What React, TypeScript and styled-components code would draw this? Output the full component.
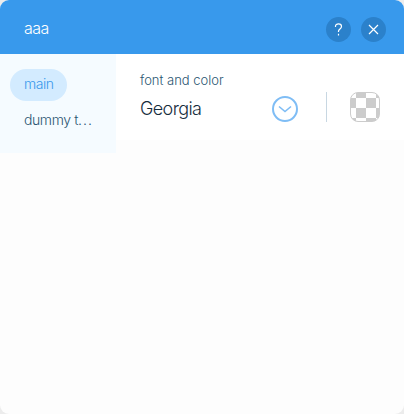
import React from 'react';
import styled, { createGlobalStyle } from 'styled-components';

const GlobalStyle = createGlobalStyle`
  * { box-sizing: border-box; }
  body { margin: 0; background: #ececec; font-family: Inter, "Liberation Sans", sans-serif; font-weight: 300; }
`;

const Panel = styled.div`
  width: 404px;
  height: 414px;
  border-radius: 9px;
  overflow: hidden;
  background: #fdfdfd;
`;

const Header = styled.header`
  display: flex;
  align-items: center;
  height: 54px;
  padding: 4px 18px 0 24px;
  background: #3899ec;
  color: #fff;
`;

const Title = styled.h1`
  flex: 1;
  margin: 0;
  padding-bottom: 3px;
  font-size: 16px;
  line-height: 24px;
  font-weight: 300;
  letter-spacing: -0.6px;
`;

const Actions = styled.div`
  display: flex;
  gap: 10px;
`;

const RoundButton = styled.button`
  display: grid;
  place-items: center;
  width: 25px;
  height: 25px;
  padding: 0;
  border: 0;
  border-radius: 50%;
  background: #2b81cb;
  color: #fff;
`;

const Body = styled.div`
  display: flex;
  align-items: flex-start;
`;

const Sidebar = styled.nav`
  display: flex;
  flex-direction: column;
  align-items: flex-start;
  gap: 4px;
  width: 116px;
  height: 99px;
  padding: 15px 10px;
  background: #f5fbff;
`;

const Tab = styled.div<{ $active?: boolean }>`
  height: 32px;
  padding: 0 14px;
  border-radius: 16px;
  font-size: 14px;
  line-height: 30px;
  white-space: nowrap;
  letter-spacing: ${p => (p.$active ? '-0.5px' : '-0.4px')};
  color: ${p => (p.$active ? '#3899ec' : '#2b5672')};
  background: ${p => (p.$active ? '#d3ebff' : 'transparent')};
`;

const Ellipsis = styled.span`
  letter-spacing: 1.1px;
`;

const Section = styled.section`
  flex: 1;
  height: 86px;
  padding: 17px 24px 0;
  background: #fff;
`;

const Label = styled.div`
  font-size: 13px;
  line-height: 18px;
  letter-spacing: 0;
  color: #2b5672;
`;

const Row = styled.div`
  display: flex;
  align-items: center;
  height: 30px;
  margin-top: 3px;
`;

const FontName = styled.div`
  flex: 1;
  padding-top: 4px;
  font-size: 18px;
  line-height: 26px;
  letter-spacing: -0.6px;
  color: #162d3d;
`;

const Divider = styled.div`
  width: 1px;
  height: 30px;
  margin: 0 23px 0 28px;
  background: #c8d7e2;
`;

const Icon = styled.svg`
  display: block;
  fill: none;
  stroke: currentColor;
`;

const Chevron = styled(Icon)`
  color: #7fbdf5;
  margin-top: 4px;
`;

const Swatch = styled.div`
  width: 30px;
  height: 30px;
  border: 1px solid #ccc;
  border-radius: 8px;
  background: conic-gradient(#ccc 25%, #fff 0 50%, #ccc 0 75%, #fff 0) -5px -5px / 20px 20px;
`;

export default function App() {
  return (
    <>
      <GlobalStyle />
      <Panel>
        <Header>
          <Title>aaa</Title>
          <Actions>
            <RoundButton aria-label="Help">
              <Icon width="9" height="13" viewBox="0 0 9 13" strokeWidth="1.2">
                <path d="M1.5 4V3.2C1.5 1.7 2.8.9 4.5.9s3 .9 3 2.6c0 2.3-3 2.5-3 4.6v1M4.5 10.8v1.6" />
              </Icon>
            </RoundButton>
            <RoundButton aria-label="Close">
              <Icon width="11" height="11" viewBox="0 0 11 11" strokeWidth="1.2">
                <path d="M1 1l9 9M10 1l-9 9" />
              </Icon>
            </RoundButton>
          </Actions>
        </Header>
        <Body>
          <Sidebar>
            <Tab $active>main</Tab>
            <Tab>dummy t<Ellipsis>...</Ellipsis></Tab>
          </Sidebar>
          <Section>
            <Label>font and color</Label>
            <Row>
              <FontName>Georgia</FontName>
              <Chevron width="26" height="26" viewBox="0 0 26 26">
                <circle cx="13" cy="13" r="12" strokeWidth="2" />
                <path d="M7 10.5l6 5 6-5" strokeWidth="1.6" />
              </Chevron>
              <Divider />
              <Swatch />
            </Row>
          </Section>
        </Body>
      </Panel>
    </>
  );
}
